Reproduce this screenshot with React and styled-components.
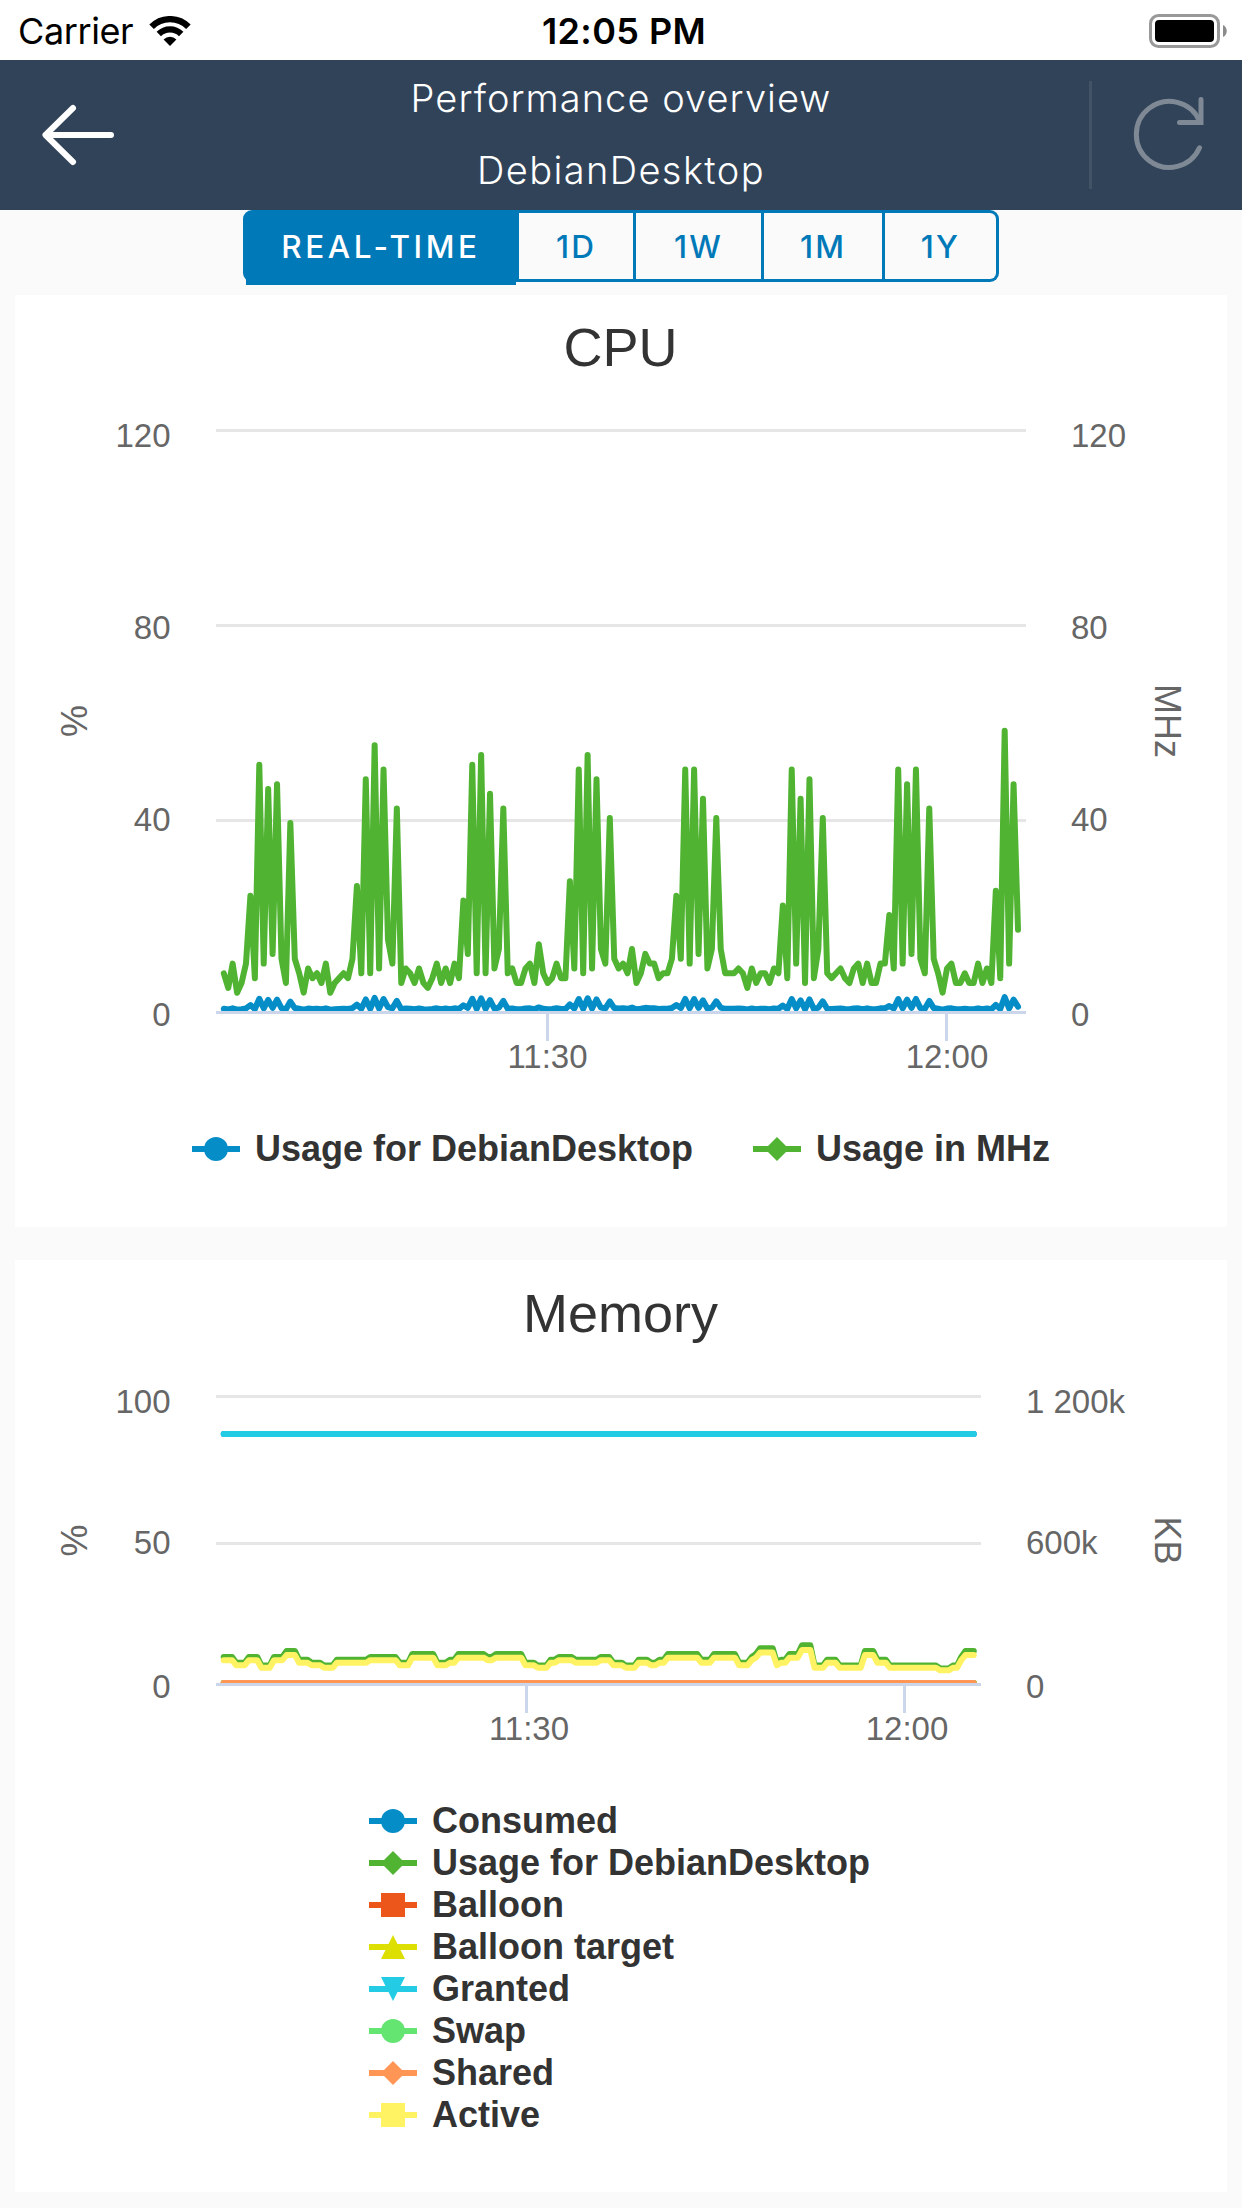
import React from "react";
import styled, { createGlobalStyle } from "styled-components";

const blue = "#058dc7";
const green = "#50b432";

const cpuMhz = [
  8, 5, 10, 4, 6, 10, 24, 7, 51, 10, 46, 12, 47, 11, 6, 39, 11, 8, 4, 9,
  7, 8, 6, 10, 4, 6, 7, 8, 7, 11, 26, 8, 48, 8, 55, 9, 50, 15, 10, 42,
  6, 9, 8, 6, 9, 6, 5, 7, 10, 6, 9, 6, 10, 7, 23, 12, 51, 8, 53, 8,
  45, 9, 13, 42, 8, 9, 6, 6, 9, 10, 6, 14, 8, 6, 7, 10, 7, 7, 27, 9,
  50, 8, 53, 9, 48, 13, 10, 40, 11, 9, 10, 8, 13, 6, 8, 12, 10, 10, 7, 8,
  8, 11, 24, 11, 50, 10, 50, 12, 44, 9, 13, 40, 13, 8, 8, 8, 9, 8, 5, 9,
  6, 8, 8, 6, 9, 8, 22, 7, 50, 10, 44, 6, 48, 7, 13, 40, 8, 7, 8, 9,
  7, 6, 9, 10, 6, 10, 6, 6, 10, 10, 20, 9, 50, 10, 47, 12, 50, 11, 8, 42,
  11, 8, 4, 9, 10, 6, 6, 8, 6, 6, 10, 6, 9, 6, 25, 7, 58, 10, 47, 17,
];

// [percent, number of samples]
const memoryRuns = [
  [9, 3], [7, 3], [9, 3], [6, 3], [9, 3], [11, 3], [8, 3], [7, 3], [6, 3],
  [8, 8], [9, 7], [7, 3], [10, 6], [7, 3], [8, 2], [10, 7], [9, 2], [10, 7],
  [7, 3], [6, 3], [8, 2], [9, 4], [8, 6], [9, 3], [7, 3], [6, 3], [8, 3],
  [7, 2], [8, 2], [10, 8], [8, 3], [10, 6], [7, 3], [9, 1], [10, 1], [12, 4],
  [7, 1], [8, 2], [10, 3], [13, 3], [6, 3], [8, 3], [6, 6], [11, 3], [8, 3],
  [6, 12], [5, 3], [6, 2], [9, 1], [11, 3],
];
const memoryUsage = memoryRuns.flatMap(([value, count]) =>
  Array(count).fill(value)
);
const zeros = memoryUsage.map(() => 0);

const cpuChart = {
  title: "CPU",
  cardHeight: 932,
  chartHeight: 720,
  left: 201,
  right: 1011,
  firstX: 208.8,
  lastX: 1003,
  zeroY: 617.1,
  unit: 4.85,
  grid: [35.5, 230.5, 425.5],
  axisY: 617.5,
  yLabels: [
    { y: 52, left: "120", right: "120" },
    { y: 244, left: "80", right: "80" },
    { y: 436, left: "40", right: "40" },
    { y: 631, left: "0", right: "0" },
  ],
  rightLabelX: 1056,
  unitY: 326,
  rightUnit: "MHz",
  ticks: [
    { x: 532.5, labelX: 532.5, label: "11:30" },
    { x: 931.5, labelX: 932, label: "12:00" },
  ],
  series: [
    {
      name: "Usage for DebianDesktop",
      color: blue,
      symbol: "circle",
      data: cpuMhz.map((value) => value * 0.048 + 0.3),
    },
    { name: "Usage in MHz", color: green, symbol: "diamond", data: cpuMhz },
  ],
};

const memoryChart = {
  title: "Memory",
  cardHeight: 932,
  chartHeight: 420,
  left: 201,
  right: 966,
  firstX: 208.7,
  lastX: 958.8,
  zeroY: 323,
  unit: 2.9,
  grid: [36.5, 183.5],
  axisY: 324.5,
  yLabels: [
    { y: 53, left: "100", right: "1 200k" },
    { y: 194, left: "50", right: "600k" },
    { y: 338, left: "0", right: "0" },
  ],
  rightLabelX: 1011,
  unitY: 180.5,
  rightUnit: "KB",
  ticks: [
    { x: 511.5, labelX: 514, label: "11:30" },
    { x: 889.5, labelX: 892, label: "12:00" },
  ],
  series: [
    {
      name: "Consumed",
      color: blue,
      symbol: "circle",
      data: memoryUsage.map(() => 85.86),
    },
    {
      name: "Usage for DebianDesktop",
      color: green,
      symbol: "diamond",
      data: memoryUsage,
    },
    { name: "Balloon", color: "#ed561b", symbol: "square", data: zeros },
    { name: "Balloon target", color: "#dddf00", symbol: "up", data: zeros },
    {
      name: "Granted",
      color: "#24cbe5",
      symbol: "down",
      data: memoryUsage.map(() => 85.86),
    },
    { name: "Swap", color: "#64e572", symbol: "circle", data: zeros },
    { name: "Shared", color: "#ff9655", symbol: "diamond", data: zeros },
    {
      name: "Active",
      color: "#fff263",
      symbol: "square",
      data: memoryUsage.map((value) => value * 0.874),
    },
  ],
};

const symbolPaths = {
  circle: "M12 12a12 12 0 1 0 24 0a12 12 0 1 0 -24 0Z",
  diamond: "M24 0L36 12L24 24L12 12Z",
  square: "M12 0H36V24H12Z",
  up: "M24 0L36 24H12Z",
  down: "M12 0H36L24 24Z",
};

const ranges = [
  { label: "REAL-TIME", width: 276, active: true },
  { label: "1D", width: 117 },
  { label: "1W", width: 128 },
  { label: "1M", width: 121 },
  { label: "1Y", width: 114 },
];

function linePath(chart, data) {
  const step = (chart.lastX - chart.firstX) / (data.length - 1);
  return data
    .map((value, i) => {
      const x = (chart.firstX + i * step).toFixed(2);
      const y = (chart.zeroY - value * chart.unit).toFixed(2);
      return `${i ? "L" : "M"}${x} ${y}`;
    })
    .join("");
}

function StatusBar() {
  return (
    <Status>
      <Carrier>
        Carrier
        <svg width="42" height="30" viewBox="0 0 42 30">
          <path
            d="M2.6 10.8A26 26 0 0 1 39.4 10.8"
            fill="none"
            stroke="#000"
            strokeWidth="6.4"
          />
          <path
            d="M9.8 18A15.8 15.8 0 0 1 32.2 18"
            fill="none"
            stroke="#000"
            strokeWidth="6.2"
          />
          <path d="M21 30L14.6 23.4A9.2 9.2 0 0 1 27.4 23.4Z" />
        </svg>
      </Carrier>
      <Clock>12:05 PM</Clock>
      <Battery>
        <svg width="79" height="34" viewBox="0 0 79 34">
          <rect
            x="1.5"
            y="1.5"
            width="68"
            height="31"
            rx="8"
            fill="none"
            stroke="#999"
            strokeWidth="3"
          />
          <rect x="6" y="6" width="59" height="22" rx="4" />
          <path d="M74 11C79 13 79 21 74 23Z" fill="#8c8c8c" />
        </svg>
      </Battery>
    </Status>
  );
}

function Header() {
  return (
    <Bar>
      <BackButton aria-label="Back">
        <svg width="76" height="64" viewBox="0 0 76 64">
          <path
            d="M71 32H6M33 5L5.5 32L33 59"
            fill="none"
            stroke="#fff"
            strokeWidth="6"
            strokeLinecap="round"
            strokeLinejoin="round"
          />
        </svg>
      </BackButton>
      <Titles>
        <PageTitle $spacing="1.05px">Performance overview</PageTitle>
        <PageTitle $spacing="1.4px">DebianDesktop</PageTitle>
      </Titles>
      <RefreshButton aria-label="Refresh">
        <svg width="76" height="76" viewBox="0 0 76 76">
          <g fill="none" stroke="#7e8995" strokeWidth="5">
            <path
              d="M68.5 50.8A33 33 0 1 1 68.5 24"
              strokeLinecap="round"
            />
            <path d="M70 2.5V25.5H48.5" strokeLinecap="round" />
          </g>
        </svg>
      </RefreshButton>
    </Bar>
  );
}

function Chart({ chart }) {
  const clipId = `clip-${chart.title}`;
  return (
    <svg
      width="1212"
      height={chart.chartHeight}
      viewBox={`0 0 1212 ${chart.chartHeight}`}
    >
      <clipPath id={clipId}>
        <rect
          x={chart.left}
          y="0"
          width={chart.right - chart.left}
          height={chart.axisY - 1.5}
        />
      </clipPath>
      {chart.grid.map((y) => (
        <path
          key={y}
          d={`M${chart.left} ${y}H${chart.right}`}
          stroke="#e6e6e6"
          strokeWidth="3"
        />
      ))}
      <g clipPath={`url(#${clipId})`}>
        {chart.series.map((item) => (
          <path
            key={item.name}
            d={linePath(chart, item.data)}
            fill="none"
            stroke={item.color}
            strokeWidth="6"
            strokeLinecap="round"
            strokeLinejoin="round"
          />
        ))}
      </g>
      <path
        d={`M${chart.left} ${chart.axisY}H${chart.right}`}
        stroke="#ccd6eb"
        strokeWidth="3"
      />
      {chart.ticks.map((tick) => (
        <g key={tick.label}>
          <path
            d={`M${tick.x} ${chart.axisY + 1.5}v27`}
            stroke="#ccd6eb"
            strokeWidth="3"
          />
          <AxisLabel x={tick.labelX} y={chart.axisY + 55.5} textAnchor="middle">
            {tick.label}
          </AxisLabel>
        </g>
      ))}
      {chart.yLabels.map((label) => (
        <g key={label.y}>
          <AxisLabel x="155.5" y={label.y} textAnchor="end">
            {label.left}
          </AxisLabel>
          <AxisLabel x={chart.rightLabelX} y={label.y}>
            {label.right}
          </AxisLabel>
        </g>
      ))}
      <AxisTitle
        textAnchor="middle"
        transform={`translate(71.5 ${chart.unitY}) rotate(-90)`}
      >
        %
      </AxisTitle>
      <AxisTitle
        textAnchor="middle"
        transform={`translate(1140 ${chart.unitY}) rotate(90)`}
      >
        {chart.rightUnit}
      </AxisTitle>
    </svg>
  );
}

function ChartCard({ chart, column }) {
  return (
    <Card $height={chart.cardHeight}>
      <CardTitle $compact={!column}>{chart.title}</CardTitle>
      <Chart chart={chart} />
      <Legend $column={column}>
        {chart.series.map((item) => (
          <LegendItem key={item.name}>
            <svg width="48" height="24" viewBox="0 0 48 24" fill={item.color}>
              <path d="M0 9H48V15H0Z" />
              <path d={symbolPaths[item.symbol]} />
            </svg>
            <span>{item.name}</span>
          </LegendItem>
        ))}
      </Legend>
    </Card>
  );
}

function App() {
  return (
    <Page>
      <GlobalStyle />
      <StatusBar />
      <Header />
      <RangeGroup>
        {ranges.map((range) => (
          <RangeButton
            key={range.label}
            $active={range.active}
            $width={range.width}
          >
            <RangeLabel $active={range.active}>{range.label}</RangeLabel>
          </RangeButton>
        ))}
      </RangeGroup>
      <Cards>
        <ChartCard chart={cpuChart} />
        <ChartCard chart={memoryChart} column />
      </Cards>
    </Page>
  );
}

const GlobalStyle = createGlobalStyle`
  * {
    box-sizing: border-box;
  }

  body {
    margin: 0;
    background: #fafafa;
  }

  svg {
    display: block;
    flex-shrink: 0;
  }

  button {
    margin: 0;
    padding: 0;
    border: 0;
    background: none;
    font: inherit;
  }
`;

const Page = styled.div`
  width: 1242px;
  height: 2208px;
  overflow: hidden;
  background: #fafafa;
  font-family: "Liberation Sans", Arial, sans-serif;
`;

const Status = styled.div`
  display: grid;
  grid-template-columns: 1fr auto 1fr;
  align-items: center;
  height: 60px;
  padding: 0 14px 0 18px;
  background: #fff;
  color: #000;
  font-family: Inter, sans-serif;
  font-size: 36px;
`;

const Carrier = styled.div`
  display: flex;
  align-items: center;
  gap: 16px;
  height: 60px;
  line-height: 62px;
  letter-spacing: -0.4px;
`;

const Clock = styled.div`
  padding-left: 2px;
  line-height: 62px;
  font-weight: 600;
  letter-spacing: 0.4px;
`;

const Battery = styled.div`
  display: flex;
  justify-content: flex-end;
`;

const Bar = styled.header`
  display: flex;
  align-items: center;
  height: 150px;
  background: #314358;
`;

const BackButton = styled.button`
  width: 153px;
  padding-left: 40px;
`;

const Titles = styled.div`
  flex: 1;
  padding-bottom: 3px;
  text-align: center;
`;

const PageTitle = styled.h1`
  margin: 0;
  color: #fff;
  font-family: Inter, sans-serif;
  font-size: 38px;
  font-weight: 300;
  line-height: 72px;
  letter-spacing: ${(props) => props.$spacing};
`;

const RefreshButton = styled.button`
  display: flex;
  align-items: center;
  width: 153px;
  height: 108px;
  padding-left: 39px;
  border-left: 3px solid #435366;
`;

const RangeGroup = styled.nav`
  display: flex;
  height: 85px;
  padding-left: 243px;
`;

const RangeButton = styled.button`
  display: flex;
  align-items: flex-start;
  width: ${(props) => props.$width}px;
  height: 72px;
  border: 3px solid #0079b8;
  border-left-width: ${(props) => (props.$active ? 3 : 0)}px;

  &:first-child {
    border-radius: 9px 0 0 9px;
  }

  &:last-child {
    border-radius: 0 9px 9px 0;
  }
`;

const RangeLabel = styled.span`
  flex: 1;
  height: ${(props) => (props.$active ? 72 : 66)}px;
  background: ${(props) => (props.$active ? "#0079b8" : "transparent")};
  color: ${(props) => (props.$active ? "#fff" : "#0079b8")};
  font-family: Inter, sans-serif;
  font-size: 31.5px;
  font-weight: 500;
  line-height: 68px;
  letter-spacing: ${(props) => (props.$active ? 3.6 : 2.2)}px;
  text-align: center;
`;

const Cards = styled.main`
  display: flex;
  flex-direction: column;
  gap: 33px;
  padding: 0 15px;
`;

const Card = styled.section`
  height: ${(props) => props.$height}px;
  background: #fff;
`;

const CardTitle = styled.h2`
  height: 100px;
  margin: 0;
  padding: ${(props) => (props.$compact ? 21 : 22)}px 1px 0 0;
  color: #333;
  font-size: 54px;
  font-weight: 400;
  line-height: 62px;
  text-align: center;
`;

const AxisLabel = styled.text`
  fill: #666;
  font-size: 33px;
`;

const AxisTitle = styled.text`
  fill: #666;
  font-size: 36px;
`;

const Legend = styled.div`
  display: flex;
  flex-direction: ${(props) => (props.$column ? "column" : "row")};
  gap: ${(props) => (props.$column ? 0 : 60)}px;
  width: fit-content;
  margin: 0 auto;
  padding-top: ${(props) => (props.$column ? 20 : 13)}px;
  padding-right: ${(props) => (props.$column ? 3 : 0)}px;
`;

const LegendItem = styled.div`
  display: flex;
  align-items: center;
  gap: 15px;
  height: 42px;
  color: #333;
  font-size: 36px;
  font-weight: bold;
  line-height: 42px;
  white-space: nowrap;
`;

export default App;
